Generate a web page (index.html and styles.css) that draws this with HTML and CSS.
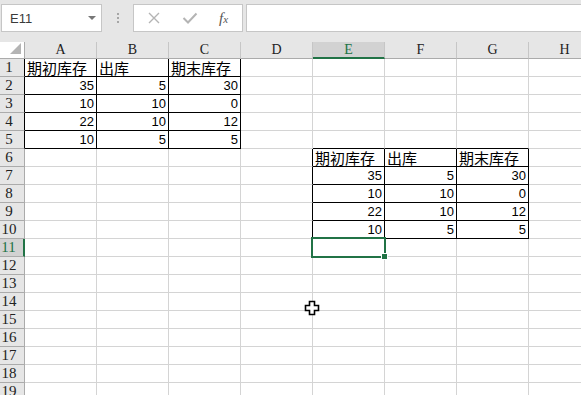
FILE: index.html
```html
<!DOCTYPE html>
<html lang="zh-CN">
<head>
    <meta charset="UTF-8">
    <meta name="viewport" content="width=device-width, initial-scale=1.0">
    <title>库存表</title>
    <link rel="stylesheet" href="styles.css">
</head>
<body>

    <div class="toolbar">
        <div class="name-box">
            <span>E11</span>
            <span class="drop"></span>
        </div>
        <div class="grip"><i></i><i></i><i></i></div>
        <div class="fx-box">
            <svg class="btn" width="14" height="14" viewBox="0 0 14 14">
                <path d="M2 2 L12 12 M12 2 L2 12" stroke="#b4b4b4" stroke-width="1.4" fill="none"/>
            </svg>
            <svg class="btn" width="16" height="14" viewBox="0 0 16 14">
                <path d="M1.5 7 L6 11.5 L14.5 2.5" stroke="#b4b4b4" stroke-width="2" fill="none"/>
            </svg>
            <span class="fx">f<span class="x">x</span></span>
        </div>
        <div class="formula"></div>
    </div>

    <div class="sheet" id="sheet">
        <div class="selection"></div>
        <svg class="cursor" width="16" height="16" viewBox="0 0 16 16">
            <path d="M5.5 1.5 H10.5 V5.5 H14.5 V10.5 H10.5 V14.5 H5.5 V10.5 H1.5 V5.5 H5.5 Z" fill="#fff" stroke="#000" stroke-width="1.6"/>
        </svg>
    </div>

    <script>
        const cols = ['A', 'B', 'C', 'D', 'E', 'F', 'G', 'H'];
        const rowCount = 19;

        // cell values, keyed by row then column
        const data = {
            1: { A: '期初库存', B: '出库', C: '期末库存' },
            2: { A: 35, B: 5, C: 30 },
            3: { A: 10, B: 10, C: 0 },
            4: { A: 22, B: 10, C: 12 },
            5: { A: 10, B: 5, C: 5 },
            6: { E: '期初库存', F: '出库', G: '期末库存' },
            7: { E: 35, F: 5, G: 30 },
            8: { E: 10, F: 10, G: 0 },
            9: { E: 22, F: 10, G: 12 },
            10: { E: 10, F: 5, G: 5 }
        };

        // ranges that have black borders (rows, column indexes)
        const boxes = [
            { r1: 1, r2: 5, c1: 0, c2: 2 },
            { r1: 6, r2: 10, c1: 4, c2: 6 }
        ];

        const selCol = 4;
        const selRow = 11;

        function borderClasses(r, c) {
            let cls = [];
            boxes.forEach(b => {
                let inRows = r >= b.r1 && r <= b.r2;
                let inCols = c >= b.c1 && c <= b.c2;
                if (inRows && inCols) cls.push('br', 'bb');
                if (r === b.r1 - 1 && inCols) cls.push('bb');
                if (c === b.c1 - 1 && inRows) cls.push('br');
            });
            return cls;
        }

        const sheet = document.getElementById('sheet');

        function addCell(text, cls) {
            let div = document.createElement('div');
            div.className = cls.join(' ');
            div.textContent = text;
            sheet.appendChild(div);
        }

        // corner
        let corner = document.createElement('div');
        corner.className = 'corner';
        corner.innerHTML = '<svg width="12" height="12" viewBox="0 0 12 12"><path d="M11 0 V11 H0 Z" fill="#b4b4b4"/></svg>';
        sheet.appendChild(corner);

        // column headers
        cols.forEach((name, c) => {
            addCell(name, c === selCol ? ['col-head', 'sel'] : ['col-head']);
        });

        // rows
        for (let r = 1; r <= rowCount; r++) {
            let headCls = ['row-head'];
            if (r === selRow) headCls.push('sel');
            if (borderClasses(r, -1).includes('br')) headCls.push('br');
            addCell(r, headCls);

            cols.forEach((name, c) => {
                let value = data[r] && data[r][name] !== undefined ? data[r][name] : '';
                let cls = ['cell'].concat(borderClasses(r, c));
                if (typeof value === 'number') cls.push('num');
                addCell(value, cls);
            });
        }
    </script>

</body>
</html>
```

FILE: styles.css
```css
body {
    margin: 0;
    width: 581px;
    height: 395px;
    overflow: hidden;
    background: #fff;
    font-family: "Liberation Sans", Arial, sans-serif;
}

/* Formula bar */
.toolbar {
    display: flex;
    align-items: flex-start;
    height: 42px;
    padding-top: 4px;
    box-sizing: border-box;
    background: #e6e6e6;
}

.name-box {
    display: flex;
    align-items: center;
    justify-content: space-between;
    box-sizing: border-box;
    width: 101px;
    height: 28px;
    margin-left: 1px;
    padding: 0 5px 0 8px;
    background: #fff;
    border: 1px solid #c6c6c6;
    font-size: 13px;
    color: #3a3a3a;
}

.drop {
    width: 0;
    height: 0;
    border-left: 4px solid transparent;
    border-right: 4px solid transparent;
    border-top: 4px solid #777;
}

.grip {
    display: flex;
    flex-direction: column;
    gap: 2px;
    width: 31px;
    align-items: center;
    padding-top: 9px;
}

.grip i {
    width: 2px;
    height: 2px;
    background: #a6a6a6;
}

.fx-box {
    display: flex;
    align-items: center;
    box-sizing: border-box;
    width: 110px;
    height: 28px;
    padding-left: 13px;
    gap: 21px;
    background: #fff;
    border: 1px solid #c6c6c6;
}

.fx {
    font-family: "Liberation Serif", serif;
    font-style: italic;
    font-size: 15px;
    color: #555;
}

.fx .x {
    font-size: 11px;
}

.formula {
    flex: 1;
    height: 28px;
    margin-left: 3px;
    margin-right: -2px;
    box-sizing: border-box;
    background: #fff;
    border: 1px solid #c6c6c6;
}

/* Sheet grid */
.sheet {
    position: relative;
    display: grid;
    grid-template-columns: 25px repeat(8, 72px);
    grid-template-rows: 17px;
    grid-auto-rows: 18px;
}

.sheet > div {
    box-sizing: border-box;
    white-space: nowrap;
}

.corner {
    display: flex;
    align-items: flex-end;
    justify-content: flex-end;
    padding: 0 2px 3px 0;
    border-right: 1px solid #ababab;
    border-bottom: 1px solid #ababab;
}

.col-head {
    text-align: center;
    font-family: "Liberation Serif", serif;
    font-size: 14px;
    line-height: 16px;
    color: #222;
    background: #e6e6e6;
    border-right: 1px solid #c6c6c6;
    border-bottom: 1px solid #ababab;
}

.row-head {
    padding-right: 6px;
    text-align: center;
    font-family: "Liberation Serif", serif;
    font-size: 15px;
    line-height: 17px;
    color: #222;
    background: #e6e6e6;
    border-right: 1px solid #ababab;
    border-bottom: 1px solid #ababab;
}

.col-head.sel {
    background: #d2d2d2;
    color: #217346;
    border-bottom: 2px solid #217346;
}

.row-head.sel {
    background: #d2d2d2;
    color: #217346;
    border-right: 2px solid #217346;
}

.cell {
    padding: 0 2px;
    font-family: "Noto Sans CJK SC", sans-serif;
    font-size: 15px;
    line-height: 17px;
    color: #000;
    border-right: 1px solid #d4d4d4;
    border-bottom: 1px solid #d4d4d4;
}

.cell.num {
    text-align: right;
    font-family: "Liberation Sans", Arial, sans-serif;
    font-size: 13px;
    line-height: 18px;
}

.sheet > .br {
    border-right-color: #000;
}

.sheet > .bb {
    border-bottom-color: #000;
}

/* Active cell and mouse pointer */
.selection {
    position: absolute;
    left: 311px;
    top: 195px;
    width: 75px;
    height: 21px;
    box-sizing: border-box;
    border: 2px solid #217346;
}

.selection::after {
    content: "";
    position: absolute;
    right: -4px;
    bottom: -4px;
    width: 5px;
    height: 5px;
    background: #217346;
    border: 1px solid #fff;
}

.cursor {
    position: absolute;
    left: 304px;
    top: 258px;
}
```
